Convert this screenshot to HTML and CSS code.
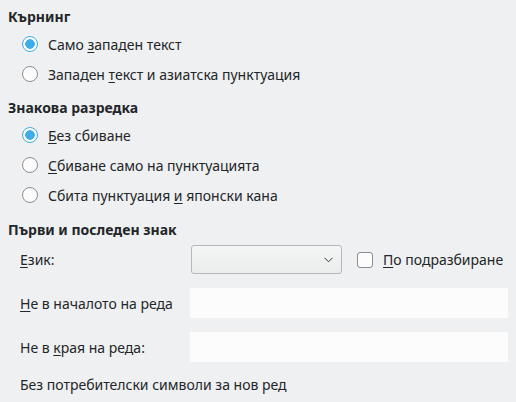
FILE: index.html
```html
<!DOCTYPE html>
<html lang="bg">
<head>
  <meta charset="UTF-8" />
  <title>Азиатска типография</title>
  <link rel="stylesheet" href="styles.css">
</head>
<body>
  <section class="group first">
    <h3 class="group-title">Кърнинг</h3>
    <label class="radio-row"><span class="radio checked"></span><span>Само <u>з</u>ападен текст</span></label>
    <label class="radio-row"><span class="radio"></span><span>Западен <u>т</u>екст и азиатска пунктуация</span></label>
  </section>

  <section class="group">
    <h3 class="group-title">Знакова разредка</h3>
    <label class="radio-row"><span class="radio checked"></span><span><u>Б</u>ез сбиване</span></label>
    <label class="radio-row"><span class="radio"></span><span><u>С</u>биване само на пунктуацията</span></label>
    <label class="radio-row"><span class="radio"></span><span>Сбита пунктуация <u>и</u> японски кана</span></label>
  </section>

  <section class="group last">
    <h3 class="group-title">Първи и последен знак</h3>
    <div class="form-grid">
      <span class="field-label"><u>Е</u>зик:</span>
      <div class="lang-line">
        <div class="combo">
          <svg class="chevron" width="9" height="6" viewBox="0 0 9 6">
            <path d="M0.5 0.8 L4.5 4.8 L8.5 0.8" fill="none" stroke="#31363b" stroke-width="1"/>
          </svg>
        </div>
        <label class="check-row"><span class="checkbox"></span><span><u>П</u>о подразбиране</span></label>
      </div>

      <span class="field-label"><u>Н</u>е в началото на реда</span>
      <div class="text-field"></div>

      <span class="field-label">Не в <u>к</u>рая на реда:</span>
      <div class="text-field"></div>
    </div>
    <p class="note">Без потребителски символи за нов ред</p>
  </section>
</body>
</html>
```

FILE: styles.css
```css
body {
  margin: 0;
  padding: 0 8px;
  background: #eff0f1;
  color: #232629;
  font-family: "Noto Sans", sans-serif;
  font-size: 14px;
}

u {
  text-decoration-thickness: 1px;
  text-underline-offset: 2px;
}

.group {
  display: flex;
  flex-direction: column;
  margin-top: 7px;
}

.group.first {
  margin-top: 5px;
}

.group.last {
  margin-top: 8px;
}

.group-title {
  margin: 0;
  height: 24px;
  line-height: 24px;
  font-size: 14px;
  font-weight: bold;
}

.radio-row {
  display: flex;
  align-items: center;
  height: 30px;
  padding-left: 14px;
}

.radio {
  width: 16px;
  height: 16px;
  box-sizing: border-box;
  border: 1px solid #8c8e90;
  border-radius: 50%;
  background: #fcfcfc;
  margin-right: 10px;
}

.radio.checked {
  border-color: #3daee9;
  background: radial-gradient(circle, #3daee9 0 4.5px, #fcfcfc 5px);
}

.form-grid {
  display: grid;
  grid-template-columns: 170px 318px;
  grid-template-rows: 29px 30px 30px;
  row-gap: 14px;
  align-items: center;
  margin-top: 3px;
  padding-left: 12px;
}

.lang-line {
  display: flex;
  align-items: center;
  height: 29px;
}

.combo {
  position: relative;
  width: 151px;
  height: 29px;
  box-sizing: border-box;
  margin-left: 1px;
  border: 1px solid #b5b7b9;
  border-radius: 3px;
  background: linear-gradient(#f4f5f5, #ebecec);
}

.chevron {
  position: absolute;
  right: 8px;
  top: 11px;
}

.check-row {
  display: flex;
  align-items: center;
  margin-left: 15px;
}

.checkbox {
  width: 16px;
  height: 16px;
  box-sizing: border-box;
  border: 1px solid #8c8e90;
  border-radius: 3px;
  background: #fcfcfc;
  margin-right: 10px;
}

.text-field {
  height: 30px;
  background: #fcfcfc;
}

.note {
  margin: 13px 0 0 12px;
  line-height: 20px;
}
```
